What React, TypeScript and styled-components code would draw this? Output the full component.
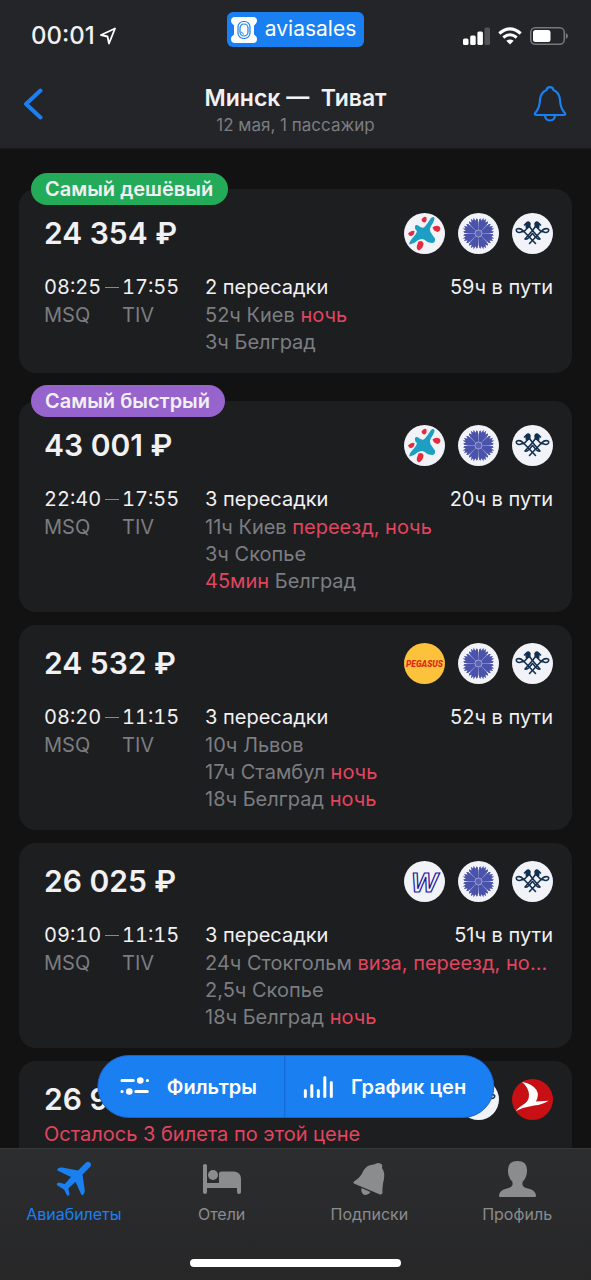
import React from 'react';
import styled, { createGlobalStyle } from 'styled-components';

const GlobalStyle = createGlobalStyle`
  *, *::before, *::after { box-sizing: border-box; }
  body {
    margin: 0;
    background: #121212;
    color: #f1f1f3;
    font-family: Inter, Roboto, sans-serif;
  }
  button { font: inherit; color: inherit; border: 0; background: none; padding: 0; cursor: pointer; }
  a { color: inherit; text-decoration: none; }
  h1, h2, p, ul { margin: 0; padding: 0; font-weight: inherit; }
  ul { list-style: none; }
  svg { display: block; flex: none; }
`;

const BLUE = '#1a80f2';
const GREY = '#7c7d80';
const RED = '#e2455f';

const Screen = styled.div`
  display: flex;
  flex-direction: column;
  height: 100vh;
`;

const Header = styled.header`
  background: #242529;
  border-bottom: 1px solid #1b1b1d;
`;

const StatusBar = styled.div`
  display: grid;
  grid-template-columns: 1fr auto 1fr;
  height: 51px;
  padding: 12px 23px 0;
`;

const Clock = styled.div`
  display: flex;
  align-items: center;
  align-self: end;
  gap: 5px;
  padding-left: 8px;
  font-size: 24px;
  font-weight: 500;
  line-height: 30px;
`;

const Brand = styled.div`
  display: flex;
  align-items: center;
  align-self: start;
  gap: 8px;
  height: 35px;
  padding: 0 8px 0 4px;
  border-radius: 6px;
  background: ${BLUE};
  font-size: 21px;
  line-height: 32px;
  color: #fff;
`;

const BrandName = styled.span`
  padding-bottom: 1px;
`;

const Signals = styled.div`
  display: flex;
  align-items: center;
  align-self: end;
  justify-content: flex-end;
  gap: 8px;
  height: 30px;
`;

const NavBar = styled.div`
  display: flex;
  align-items: center;
  justify-content: space-between;
  padding: 32px 24px 11px;
`;

const IconButton = styled.button<{ $align: string }>`
  display: flex;
  justify-content: ${(p) => p.$align};
  width: 36px;
  padding-bottom: 12px;
`;

const Titles = styled.div`
  text-align: center;
`;

const Title = styled.h1`
  font-size: 23px;
  font-weight: 600;
  line-height: 30px;
  white-space: pre;
`;

const Subtitle = styled.p`
  font-size: 17px;
  line-height: 24px;
  color: ${GREY};
`;

const Main = styled.main`
  position: relative;
  flex: 1;
  min-height: 0;
`;

const Results = styled.ul`
  display: flex;
  flex-direction: column;
  gap: 13px;
  height: 100%;
  padding: 40px 19px 13px;
  overflow-y: auto;
  scrollbar-width: none;
`;

const Card = styled.li<{ $badged: boolean; $spaced: boolean }>`
  position: relative;
  flex: none;
  margin-top: ${(p) => (p.$spaced ? '15px' : '0')};
  padding: ${(p) => (p.$badged ? '24px' : '18px')} 19px 17px 25px;
  border-radius: 17px;
  background: #1d1e20;
`;

const Badge = styled.span<{ $color: string }>`
  position: absolute;
  top: -16px;
  left: 12px;
  height: 32px;
  padding: 0 15px 0 14px;
  border-radius: 16px;
  background: ${(p) => p.$color};
  font-size: 20px;
  font-weight: 600;
  line-height: 32px;
`;

const CardTop = styled.div`
  display: flex;
  align-items: center;
  justify-content: space-between;
`;

const Price = styled.h2`
  font-size: 30px;
  font-weight: 600;
  line-height: 41px;
`;

const Airlines = styled.div`
  display: flex;
  gap: 13px;
`;

const Notice = styled.p`
  margin-top: 1px;
  font-size: 20px;
  line-height: 27px;
  color: ${RED};
`;

const Details = styled.div`
  display: grid;
  grid-template-columns: 161px minmax(0, 1fr);
  margin-top: 18px;
  font-size: 20px;
  line-height: 27px;
`;

const Times = styled.div`
  display: grid;
  grid-template-columns: 78px auto;
  align-content: start;
  justify-content: start;
`;

const Time = styled.span`
  display: flex;
  align-items: center;
  gap: 4px;
  line-height: 30px;
  font-variant-numeric: tabular-nums;
`;

const Dash = styled.i`
  width: 14px;
  height: 1px;
  background: #8a8b8d;
`;

const Code = styled.span`
  color: ${GREY};
`;

const Summary = styled.div`
  display: flex;
  justify-content: space-between;
  line-height: 30px;
`;

const Stop = styled.p`
  overflow: hidden;
  padding-right: 2px;
  color: ${RED};
  text-overflow: ellipsis;
  white-space: nowrap;
`;

const Muted = styled.span`
  color: ${GREY};
`;

const FloatingBar = styled.div`
  position: absolute;
  left: 50%;
  bottom: 30px;
  display: flex;
  overflow: hidden;
  border: 1px solid #1c5fd0;
  border-radius: 32px;
  background: ${BLUE};
  transform: translateX(-50%);
`;

const FloatingButton = styled.button`
  display: flex;
  align-items: center;
  gap: 18px;
  height: 61px;
  padding: 0 27px 0 22px;
  font-size: 20px;
  font-weight: 600;
  white-space: nowrap;
  color: #fff;

  & + & {
    padding-left: 18px;
    border-left: 1px solid #1763c8;
  }
`;

const Footer = styled.footer`
  display: flex;
  flex-direction: column;
  align-items: center;
  border-top: 1px solid #37393b;
  background: linear-gradient(#2c2d2f, #272728);
`;

const Tabs = styled.nav`
  display: flex;
  width: 100%;
  padding-top: 12px;
`;

const Tab = styled.a<{ $active: boolean }>`
  display: flex;
  flex: 1;
  flex-direction: column;
  align-items: center;
  gap: 5px;
  font-size: 16px;
  line-height: 24px;
  color: ${(p) => (p.$active ? BLUE : '#8b8c8e')};
`;

const HomeIndicator = styled.div`
  width: 211px;
  height: 8px;
  margin: 33px 0 13px;
  border-radius: 4px;
  background: #fff;
`;

function MotorSich() {
  return (
    <svg width="41" height="41" viewBox="0 0 41 41" role="img" aria-label="Motor Sich">
      <circle cx="20.5" cy="20.5" r="20.5" fill="#f1f3f8" />
      <path d="M20.500 14Q24 10 27 5Q29.500 3 30.500 5Q30.500 8 27 13Q25 16 26.500 19Q29 23 31 25.500Q31.500 29.500 28.500 30Q24 30 20 26.500Q17 25 13.500 27.500Q10 31 5.500 31.500Q4.500 29.500 8.500 25Q12.500 21 13 18Q10.500 16.500 11 13Q12.500 11 15.500 13.500Q18.500 15.500 20.500 14Z" fill="#1d9fc3" />
      <path d="M17.500 6.500Q20 2.500 22.500 4.500Q23 9 20.500 9.500Q18 9.500 17.500 6.500Z" fill="#e62b3c" />
      <path d="M28.500 14.500Q32 11.500 36 14Q37.500 17.500 33.500 19Q29.500 18 28.500 14.500Z" fill="#e62b3c" />
      <path d="M4 20.500Q7 17 10.500 18Q10.500 22 7.500 23Q5 23.500 4 20.500Z" fill="#e62b3c" />
      <path d="M14.500 28.500Q18.500 27 19.500 30.500Q19 35.500 15 37.500Q12 36.500 13 32.500Z" fill="#e62b3c" />
    </svg>
  );
}

const petal = (() => {
  const radii = [14, 15.5, 13, 16.5, 14, 16.5, 13, 15.5, 14];
  const points = radii.map((r, i) => {
    const a = ((-20 + (40 * i) / 8) * Math.PI) / 180;
    return `${(r * Math.sin(a)).toFixed(2)},${(-r * Math.cos(a)).toFixed(2)}`;
  });
  return `M-1.3,-3.500L${points.join('L')}L1.3,-3.500Z`;
})();

function Belavia() {
  return (
    <svg width="41" height="41" viewBox="0 0 41 41" role="img" aria-label="Belavia">
      <circle cx="20.5" cy="20.5" r="20.5" fill="#f1f3f8" />
      <g transform="translate(20.5 20.5)">
        <circle r="12" fill="#9298cf" />
        {[0, 45, 90, 135, 180, 225, 270, 315].map((angle) => (
          <path key={angle} d={petal} fill="#4a52a9" transform={`rotate(${angle + 22.5})`} />
        ))}
        <circle r="3.500" fill="#5a62b2" stroke="#a6abd9" strokeWidth="0.8" />
      </g>
    </svg>
  );
}

function AirSerbia() {
  const half = (
    <g fill="none" stroke="#14304f" strokeWidth="1.600" strokeLinecap="round" strokeLinejoin="round">
      <path d="M12.500 12L14.500 10Q16.500 8 17.800 10.500L17.500 13L13.500 17Q12 19 10 18.500Q7 20.500 4.800 18.500Q3.500 16.500 5.500 15.800Q8.500 15 11 17.500L23.500 30.500" />
      <path d="M14 11L17.500 10V13.500L14.500 15Z" fill="#14304f" />
      <path d="M17.500 13.500L20.500 17.500L27.500 25.500" />
      <path d="M13 26Q15 26.500 17 24.500L20.500 20.500" />
    </g>
  );
  return (
    <svg width="41" height="41" viewBox="0 0 41 41" role="img" aria-label="Air Serbia">
      <circle cx="20.5" cy="20.5" r="20.5" fill="#f1f3f8" />
      {half}
      <g transform="matrix(-1 0 0 1 41 0)">{half}</g>
    </svg>
  );
}

function Pegasus() {
  return (
    <svg width="41" height="41" viewBox="0 0 41 41" role="img" aria-label="Pegasus">
      <circle cx="20.5" cy="20.5" r="20.5" fill="#fdc23b" />
      <text x="20.5" y="23.5" textAnchor="middle" fontFamily="Roboto, sans-serif" fontSize="8.500" fontWeight="900" fontStyle="italic" fill="#dd2a1b">PEGASUS</text>
    </svg>
  );
}

function WLogo() {
  return (
    <svg width="41" height="41" viewBox="0 0 41 41" role="img" aria-label="W">
      <circle cx="20.5" cy="20.5" r="20.5" fill="#f1f3f8" />
      <text x="20.5" y="31" textAnchor="middle" fontFamily="Liberation Sans, sans-serif" fontSize="28" fontWeight="700" fontStyle="italic" fill="#f1f3f8" stroke="#22129c" strokeWidth="1.200">W</text>
    </svg>
  );
}

function Turkish() {
  return (
    <svg width="41" height="41" viewBox="0 0 41 41" role="img" aria-label="Turkish Airlines">
      <circle cx="20.5" cy="20.5" r="20.5" fill="#c80f14" />
      <path d="M10 3Q20 4.500 24.500 11Q27.500 16 24 22.500L36.500 21.700Q31 25.500 22 26.500Q12 28 4 32Q5 29.500 10 26.500Q17.500 22.500 17 15Q16 8 10 3Z" fill="#fff" />
    </svg>
  );
}

const LOGOS: Record<string, () => React.ReactElement> = {
  motorsich: MotorSich,
  belavia: Belavia,
  airserbia: AirSerbia,
  pegasus: Pegasus,
  w: WLogo,
  turkish: Turkish,
};

type StopInfo = { lead?: string; text?: string; warn?: string };
type Ticket = {
  price: string;
  badge?: { label: string; color: string };
  notice?: string;
  airlines: string[];
  depart: string;
  arrive: string;
  changes: string;
  duration: string;
  stops: StopInfo[];
};

const TICKETS: Ticket[] = [
  {
    price: '24 354 ₽',
    badge: { label: 'Самый дешёвый', color: '#23ab59' },
    airlines: ['motorsich', 'belavia', 'airserbia'],
    depart: '08:25',
    arrive: '17:55',
    changes: '2 пересадки',
    duration: '59ч в пути',
    stops: [{ text: '52ч Киев ', warn: 'ночь' }, { text: '3ч Белград' }],
  },
  {
    price: '43 001 ₽',
    badge: { label: 'Самый быстрый', color: '#9763cd' },
    airlines: ['motorsich', 'belavia', 'airserbia'],
    depart: '22:40',
    arrive: '17:55',
    changes: '3 пересадки',
    duration: '20ч в пути',
    stops: [{ text: '11ч Киев ', warn: 'переезд, ночь' }, { text: '3ч Скопье' }, { lead: '45мин', text: ' Белград' }],
  },
  {
    price: '24 532 ₽',
    airlines: ['pegasus', 'belavia', 'airserbia'],
    depart: '08:20',
    arrive: '11:15',
    changes: '3 пересадки',
    duration: '52ч в пути',
    stops: [{ text: '10ч Львов' }, { text: '17ч Стамбул ', warn: 'ночь' }, { text: '18ч Белград ', warn: 'ночь' }],
  },
  {
    price: '26 025 ₽',
    airlines: ['w', 'belavia', 'airserbia'],
    depart: '09:10',
    arrive: '11:15',
    changes: '3 пересадки',
    duration: '51ч в пути',
    stops: [
      { text: '24ч Стокгольм ', warn: 'виза, переезд, ночь' },
      { text: '2,5ч Скопье' },
      { text: '18ч Белград ', warn: 'ночь' },
    ],
  },
  {
    price: '26 9',
    notice: 'Осталось 3 билета по этой цене',
    airlines: ['airserbia', 'turkish'],
    depart: '',
    arrive: '',
    changes: '',
    duration: '',
    stops: [],
  },
];

function TicketCard({ ticket, first }: { ticket: Ticket; first: boolean }) {
  return (
    <Card $badged={!!ticket.badge} $spaced={!!ticket.badge && !first}>
      {ticket.badge && <Badge $color={ticket.badge.color}>{ticket.badge.label}</Badge>}
      <CardTop>
        <Price>{ticket.price}</Price>
        <Airlines>
          {ticket.airlines.map((name) => {
            const Logo = LOGOS[name];
            return <Logo key={name} />;
          })}
        </Airlines>
      </CardTop>
      {ticket.notice && <Notice>{ticket.notice}</Notice>}
      {ticket.stops.length > 0 && (
        <Details>
          <Times>
            <Time>{ticket.depart}<Dash /></Time>
            <Time>{ticket.arrive}</Time>
            <Code>MSQ</Code>
            <Code>TIV</Code>
          </Times>
          <div>
            <Summary>
              <span>{ticket.changes}</span>
              <span>{ticket.duration}</span>
            </Summary>
            {ticket.stops.map((stop, i) => (
              <Stop key={i}>{stop.lead}<Muted>{stop.text}</Muted>{stop.warn}</Stop>
            ))}
          </div>
        </Details>
      )}
    </Card>
  );
}

const TABS = [
  {
    label: 'Авиабилеты',
    icon: (
      <svg width="36" height="36" viewBox="0 0 36 36" fill="currentColor">
        <path d="M22 9.500L29.500 2Q32 0 34 1.500Q36 3.500 34 6L26.500 13.500L28.800 29.500Q28.800 31 27.500 33.500Q26 35 25 33L19.500 20.800L12.300 27.500L13.600 33Q13 35 11.500 35L8 28.500L.8 24Q.5 22 2.500 21.500L8.800 23L15 16L1.500 9.500Q.5 8.500 2.500 7Q4 6.300 6 6.500Z" />
      </svg>
    ),
  },
  {
    label: 'Отели',
    icon: (
      <svg width="38" height="36" viewBox="0 0 38 36" fill="currentColor">
        <path d="M0 4.500Q0 3 2 3Q4 3 4 4.500V22H16V12.500Q16 10.500 18.500 10.500H31Q38 11 38 18V31Q38 33 36 33Q34 33 34 31V27H4V31Q4 33 2 33Q0 33 0 31Z" />
        <circle cx="10" cy="14" r="5" />
      </svg>
    ),
  },
  {
    label: 'Подписки',
    icon: (
      <svg width="36" height="36" viewBox="0 0 36 36" fill="currentColor">
        <path d="M3 20.500Q10 16 12.500 9.500Q16 3.500 23 3.500Q27.500 .5 31 3.500Q31.500 5 31 7Q34 11 33 18Q31 26 31.500 31.500Q31.500 34 29 33.500L4 23Q1.500 22 3 20.500Z" />
        <path d="M10.500 27L19.500 31Q17 35 13 33.800Q9.500 31.500 10.500 27Z" />
      </svg>
    ),
  },
  {
    label: 'Профиль',
    icon: (
      <svg width="37" height="36" viewBox="0 0 37 36" fill="currentColor">
        <path d="M18.500 0Q28.500 0 28 10Q28 12 27.500 14Q26.500 18 23.500 21V24Q24.500 26.500 29 27.500Q36.500 29 37 34.500Q37 36 36 36H1Q0 36 0 34.500Q.5 29 8 27.500Q12.500 26.500 13.500 24V21Q10.500 18 9.500 14Q9 12 9 10Q8.500 0 18.500 0Z" />
      </svg>
    ),
  },
];

export default function App() {
  return (
    <Screen>
      <GlobalStyle />
      <Header>
        <StatusBar>
          <Clock>
            00:01
            <svg width="16" height="18" viewBox="0 0 16 18" fill="none" stroke="#fff" strokeWidth="1.800" strokeLinejoin="round">
              <path d="M15 1.500L1 8L7.500 9.500L9 16.500Z" />
            </svg>
          </Clock>
          <Brand>
            <svg width="26" height="26" viewBox="0 0 26 26">
              <path d="M4 0H22Q26 0 26 4Q26 6.500 23 8.500V17.500Q26 19.500 26 22Q26 26 22 26H4Q0 26 0 22Q0 19.500 3 17.500V8.500Q0 6.500 0 4Q0 0 4 0Z" fill="#fff" />
              <rect x="7" y="4.500" width="12" height="17" rx="5.500" fill="none" stroke={BLUE} strokeWidth="1.200" />
              <rect x="9" y="7" width="8" height="12" rx="4" fill="none" stroke={BLUE} strokeWidth="1.200" />
              <path d="M10 15Q11.500 15 12.500 17.500" fill="none" stroke={BLUE} strokeWidth="1" />
            </svg>
            <BrandName>aviasales</BrandName>
          </Brand>
          <Signals>
            <svg width="27" height="18" viewBox="0 0 27 18" fill="#fff">
              <rect x="0" y="11.500" width="5.500" height="6.500" rx="1.500" />
              <rect x="7.200" y="8.500" width="5.500" height="9.500" rx="1.500" />
              <rect x="14.400" y="4.500" width="5.500" height="13.500" rx="1.500" />
              <rect x="21.500" y=".5" width="5.500" height="17.500" rx="1.500" fill="#525356" />
            </svg>
            <svg width="24" height="18" viewBox="0 0 24 18" fill="none" stroke="#fff" strokeWidth="3">
              <path d="M1.300 6.500Q12-2.800 22.700 6.500" />
              <path d="M5.300 10.500Q12 5 18.700 10.500" />
              <path d="M12 17.500L8.300 13.800Q12 11 15.700 13.800Z" fill="#fff" stroke="none" />
            </svg>
            <svg width="38" height="18" viewBox="0 0 38 18">
              <rect x=".75" y=".75" width="33.500" height="16.500" rx="4.500" fill="none" stroke="#77787b" strokeWidth="1.500" />
              <rect x="3" y="3" width="17.500" height="12" rx="2.500" fill="#fff" />
              <path d="M35.800 6Q38 7 38 9Q38 11 35.800 12Z" fill="#77787b" />
            </svg>
          </Signals>
        </StatusBar>
        <NavBar>
          <IconButton $align="flex-start" aria-label="Назад">
            <svg width="20" height="32" viewBox="0 0 20 32" fill="none" stroke={BLUE} strokeWidth="4" strokeLinecap="round" strokeLinejoin="round">
              <path d="M16.500 2.500L2 16L16.500 29.500" />
            </svg>
          </IconButton>
          <Titles>
            <Title>{'Минск —  Тиват'}</Title>
            <Subtitle>12 мая, 1 пассажир</Subtitle>
          </Titles>
          <IconButton $align="flex-end" aria-label="Уведомления">
            <svg width="34" height="36" viewBox="0 0 34 36" fill="none" stroke={BLUE} strokeWidth="2.200" strokeLinejoin="round">
              <path d="M13.500 4Q14 1.200 17 1.200Q20 1.200 20.500 4Q26.500 6.500 27 14Q27.500 22 31 26Q33.500 28.500 31 29H3Q.5 28.500 3 26Q6.500 22 7 14Q7.500 6.500 13.500 4Z" />
              <path d="M12 29.500Q12.500 34.500 17 34.500Q21.500 34.500 22 29.500" />
            </svg>
          </IconButton>
        </NavBar>
      </Header>

      <Main>
        <Results>
          {TICKETS.map((ticket, i) => (
            <TicketCard key={ticket.price} ticket={ticket} first={i === 0} />
          ))}
        </Results>
        <FloatingBar>
          <FloatingButton>
            <svg width="29" height="20" viewBox="0 0 29 20" fill="none" stroke="#fff" strokeWidth="3" strokeLinecap="round">
              <path d="M1.500 3.500H13M27 3.500H27.200M1.500 14.500H1.800M15.500 14.500H27" />
              <circle cx="20" cy="3.500" r="3.300" fill="#fff" stroke="none" />
              <circle cx="9" cy="14.500" r="3.300" fill="#fff" stroke="none" />
            </svg>
            Фильтры
          </FloatingButton>
          <FloatingButton>
            <svg width="30" height="22" viewBox="0 0 30 22" fill="none" stroke="#fff" strokeWidth="3" strokeLinecap="round">
              <path d="M2 14.500V20.500M8.500 9.500V20.500M15 14.500V20.500M21.500 1.500V20.500M28 6.500V20.500" />
            </svg>
            График цен
          </FloatingButton>
        </FloatingBar>
      </Main>

      <Footer>
        <Tabs>
          {TABS.map((tab, i) => (
            <Tab key={tab.label} href="#" $active={i === 0}>
              {tab.icon}
              {tab.label}
            </Tab>
          ))}
        </Tabs>
        <HomeIndicator />
      </Footer>
    </Screen>
  );
}
